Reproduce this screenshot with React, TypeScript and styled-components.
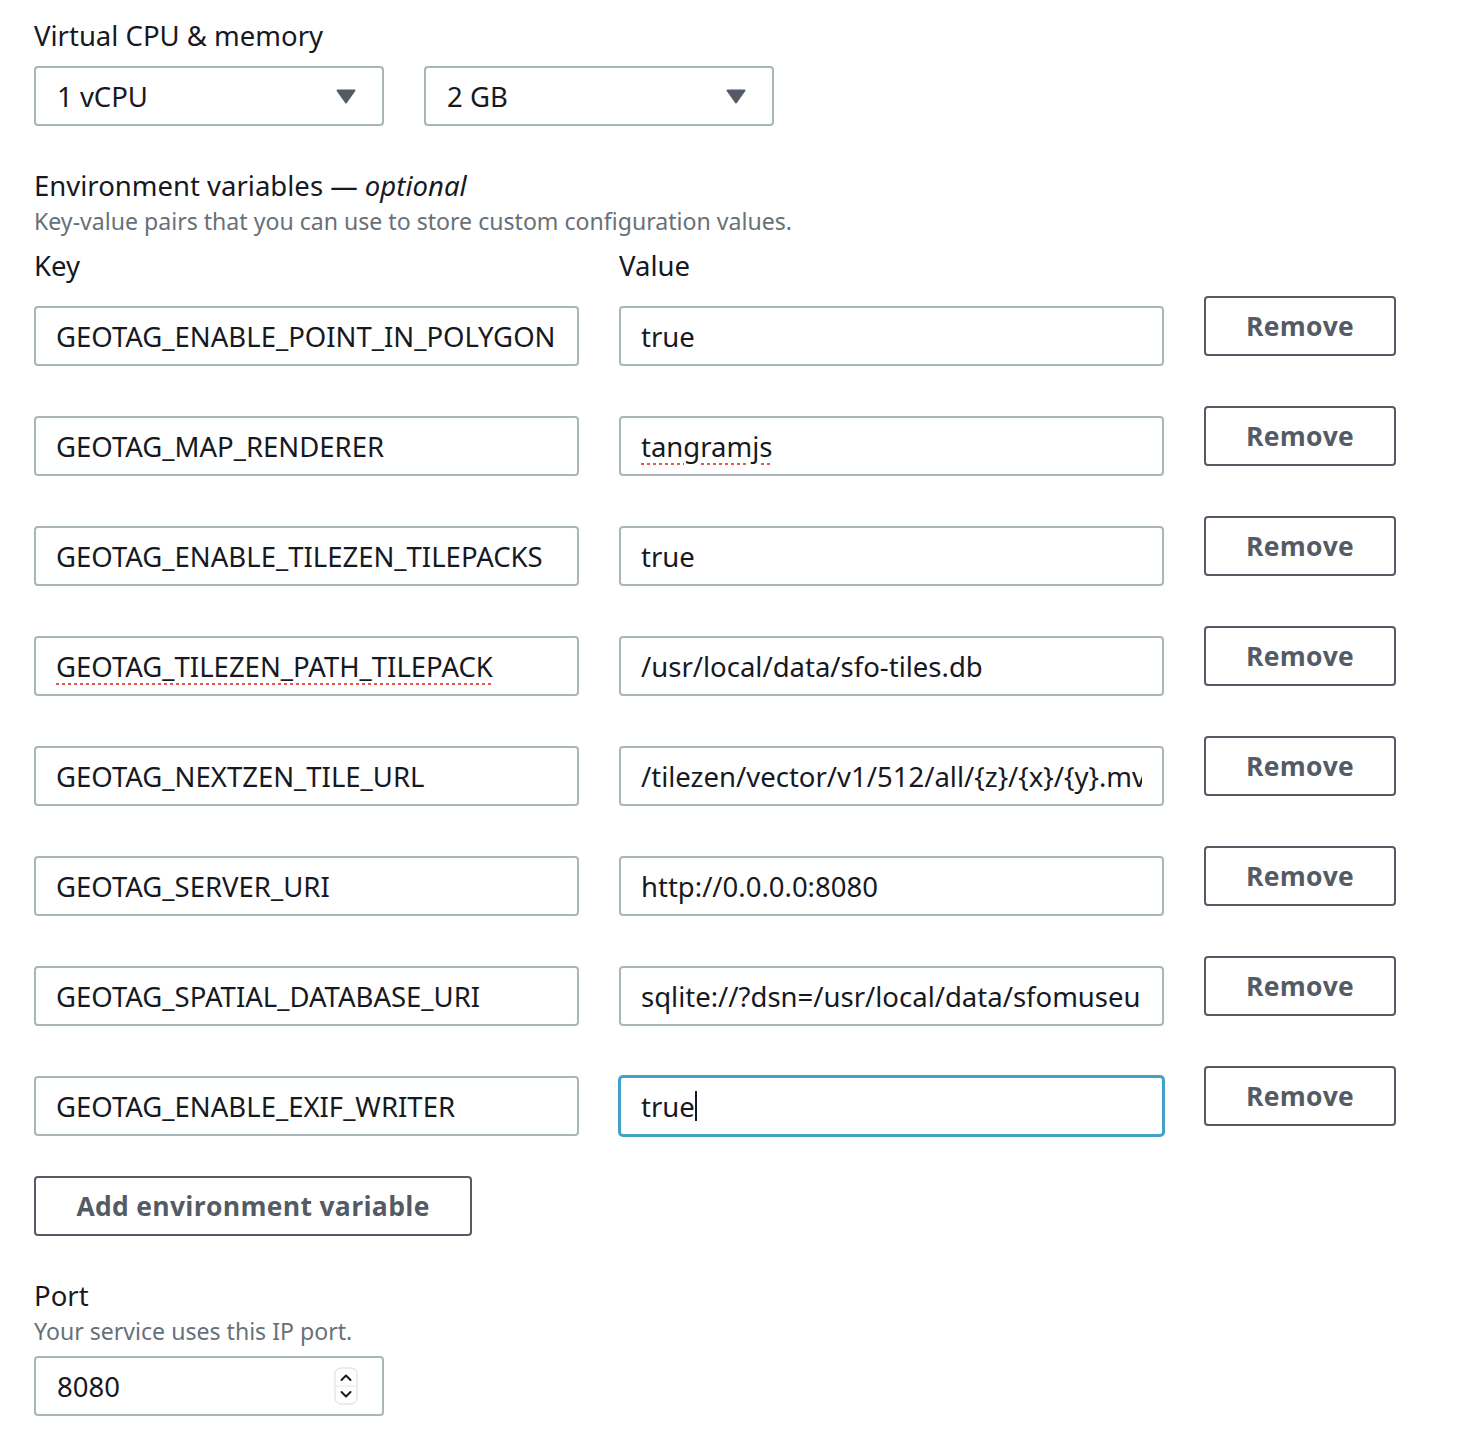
import styled, { createGlobalStyle } from 'styled-components';

const GlobalStyle = createGlobalStyle`
  body {
    margin: 0;
    background: #ffffff;
    font-family: 'Noto Sans', 'Open Sans', sans-serif;
    color: #16191f;
  }
`;

type EnvVar = { key: string; value: string; keyTypo?: boolean; valueTypo?: boolean };

const ENV_VARS: EnvVar[] = [
  { key: 'GEOTAG_ENABLE_POINT_IN_POLYGON', value: 'true' },
  { key: 'GEOTAG_MAP_RENDERER', value: 'tangramjs', valueTypo: true },
  { key: 'GEOTAG_ENABLE_TILEZEN_TILEPACKS', value: 'true' },
  { key: 'GEOTAG_TILEZEN_PATH_TILEPACK', value: '/usr/local/data/sfo-tiles.db', keyTypo: true },
  { key: 'GEOTAG_NEXTZEN_TILE_URL', value: '/tilezen/vector/v1/512/all/{z}/{x}/{y}.mvt' },
  { key: 'GEOTAG_SERVER_URI', value: 'http://0.0.0.0:8080' },
  { key: 'GEOTAG_SPATIAL_DATABASE_URI', value: 'sqlite://?dsn=/usr/local/data/sfomuseum.db' },
  { key: 'GEOTAG_ENABLE_EXIF_WRITER', value: 'true' },
];

function Caret() {
  return (
    <svg width="20" height="15" viewBox="0 0 20 15">
      <path d="M1.5 1.5 L18.5 1.5 L10 13.5 Z" fill="#545b64" stroke="#545b64" strokeWidth="2" strokeLinejoin="round" />
    </svg>
  );
}

function Spinner() {
  return (
    <svg width="24" height="38" viewBox="0 0 24 38">
      <rect x="1" y="1" width="22" height="36" rx="6" fill="#ffffff" stroke="#d5dbdb" />
      <line x1="2" y1="19" x2="22" y2="19" stroke="#e3e6e6" />
      <path d="M7.5 13 L12 8.5 L16.5 13" fill="none" stroke="#16191f" strokeWidth="2" strokeLinecap="round" strokeLinejoin="round" />
      <path d="M7.5 25 L12 29.5 L16.5 25" fill="none" stroke="#16191f" strokeWidth="2" strokeLinecap="round" strokeLinejoin="round" />
    </svg>
  );
}

export default function App() {
  return (
    <Page>
      <GlobalStyle />

      <Section>
        <Label>Virtual CPU &amp; memory</Label>
        <SelectRow>
          <Select>
            <span>1 vCPU</span>
            <Caret />
          </Select>
          <Select>
            <span>2 GB</span>
            <Caret />
          </Select>
        </SelectRow>
      </Section>

      <Section $offset={2}>
        <Label>
          Environment variables — <em>optional</em>
        </Label>
        <Description>Key-value pairs that you can use to store custom configuration values.</Description>
        <EnvGrid>
          <ColumnLabel>Key</ColumnLabel>
          <ColumnLabel>Value</ColumnLabel>
          <span />
          {ENV_VARS.map((v, i) => {
            const focused = i === ENV_VARS.length - 1;
            return (
              <EnvRow key={v.key}>
                <Field>
                  <FieldText>{v.keyTypo ? <Typo>{v.key}</Typo> : v.key}</FieldText>
                </Field>
                <Field $focused={focused}>
                  <FieldText>
                    {v.valueTypo ? <Typo>{v.value}</Typo> : v.value}
                    {focused && <TextCursor />}
                  </FieldText>
                </Field>
                <Button>Remove</Button>
              </EnvRow>
            );
          })}
        </EnvGrid>
        <AddButton>Add environment variable</AddButton>
      </Section>

      <Section $offset={2}>
        <Label>Port</Label>
        <Description>Your service uses this IP port.</Description>
        <NumberField>
          <span>8080</span>
          <Spinner />
        </NumberField>
      </Section>
    </Page>
  );
}

const Page = styled.div`
  padding: 18px 34px 24px;
  display: flex;
  flex-direction: column;
  gap: 40px;
`;

const Section = styled.div<{ $offset?: number }>`
  display: flex;
  flex-direction: column;
  margin-top: ${({ $offset }) => $offset ?? 0}px;
`;

const Label = styled.div`
  font-size: 27.5px;
  line-height: 36px;
  color: #16191f;

  em {
    font-style: italic;
  }
`;

const Description = styled.div`
  font-size: 23.1px;
  line-height: 34px;
  color: #687078;
`;

const SelectRow = styled.div`
  display: flex;
  gap: 40px;
  margin-top: 12px;
`;

const fieldBase = `
  box-sizing: border-box;
  height: 60px;
  border: 2px solid #aab7b8;
  border-radius: 4px;
  background: #ffffff;
  font-size: 27.5px;
  color: #16191f;
  display: flex;
  align-items: center;
`;

const Select = styled.div`
  ${fieldBase}
  width: 350px;
  padding: 0 26px 0 21px;
  justify-content: space-between;
`;

const EnvGrid = styled.div`
  display: grid;
  grid-template-columns: 545px 545px 192px;
  column-gap: 40px;
  row-gap: 50px;
  margin-top: 10px;
`;

const ColumnLabel = styled.div`
  font-size: 27.5px;
  line-height: 36px;
  margin-bottom: -28px;
`;

const EnvRow = styled.div`
  display: contents;
`;

const Field = styled.div<{ $focused?: boolean }>`
  ${fieldBase}
  width: 545px;
  padding: 0 20px;
  ${({ $focused }) =>
    $focused &&
    `
    border-color: #44a2c8;
    box-shadow: 0 0 0 1px #44a2c8;
  `}
`;

const FieldText = styled.div`
  flex: 1;
  min-width: 0;
  overflow: hidden;
  white-space: nowrap;
  display: flex;
  align-items: center;
`;

const Typo = styled.span`
  text-decoration: underline dotted #e8574c;
  text-decoration-thickness: 3px;
  text-underline-offset: 6px;
`;

const TextCursor = styled.span`
  display: inline-block;
  width: 2px;
  height: 30px;
  background: #16191f;
`;

const Button = styled.button`
  box-sizing: border-box;
  height: 60px;
  margin-top: -10px;
  border: 2px solid #545b64;
  border-radius: 4px;
  background: #ffffff;
  color: #545b64;
  font-family: 'Open Sans', 'Noto Sans', sans-serif;
  font-weight: 700;
  font-size: 26.5px;
  letter-spacing: 0.3px;
  cursor: pointer;
`;

const AddButton = styled(Button)`
  width: 438px;
  margin-top: 40px;
`;

const NumberField = styled.div`
  ${fieldBase}
  width: 350px;
  margin-top: 8px;
  padding: 0 24px 0 21px;
  justify-content: space-between;
`;
